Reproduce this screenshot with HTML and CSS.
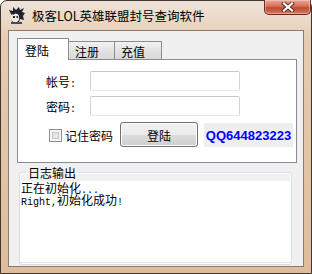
FILE: index.html
```html
<!DOCTYPE html>
<html lang="zh-CN">
<head>
  <meta charset="UTF-8">
  <title>极客LOL英雄联盟封号查询软件</title>
  <link rel="stylesheet" href="styles.css">
</head>
<body>
  <div class="window">
    <div class="titlebar">
      <svg class="app-icon" width="16" height="17" viewBox="0 0 16 17">
        <path d="M2 7 L0 3 L4 4 L4 0 L7 3 L10 0 L11 3 L15 1 L13 5 L16 6 L14 9 L15 13 L11 12 L10 15 L3 15 Z" fill="#1d2333"/>
        <path d="M2 8 L5 6 L9 7 L10 9 L10 13 L8 15 L4 15 L2 12 Z" fill="#f6e6da"/>
        <path d="M3 6 L6 4 L8 5 L10 4 L10 8 L7 6 L4 8 Z" fill="#1d2333"/>
        <rect x="4" y="9" width="2" height="2" fill="#222"/>
        <rect x="7.5" y="9" width="1.5" height="2" fill="#222"/>
        <path d="M2 15 L13 15 L13 17 L2 17 Z" fill="#3b4a7a"/>
      </svg>
      <span class="title">极客LOL英雄联盟封号查询软件</span>
      <div class="close-btn">
        <svg width="16" height="10" viewBox="0 0 16 10">
          <path d="M4 1.5 L12 8.5 M12 1.5 L4 8.5" stroke="#5a2a20" stroke-width="4" stroke-linecap="square"/>
          <path d="M4 1.5 L12 8.5 M12 1.5 L4 8.5" stroke="#ffffff" stroke-width="2.2" stroke-linecap="square"/>
        </svg>
      </div>
    </div>

    <div class="client">
      <div class="tabs">
        <div class="tab-head">
          <div class="tab active">登陆</div>
          <div class="tab">注册</div>
          <div class="tab">充值</div>
        </div>
        <div class="tab-panel">
          <div class="field">
            <label for="account">帐号<span class="ascii">:</span></label>
            <input type="text" id="account">
          </div>
          <div class="field">
            <label for="password">密码<span class="ascii">:</span></label>
            <input type="password" id="password">
          </div>
          <div class="actions">
            <span class="check"></span>
            <span class="check-label">记住密码</span>
            <button class="login-btn">登陆</button>
            <span class="qq">QQ644823223</span>
          </div>
        </div>
      </div>

      <fieldset class="log">
        <legend>日志输出</legend>
        <div class="log-text">
          <div class="log-line">正在初始化<span class="ascii">...</span></div>
          <div class="log-line"><span class="ascii">Right,</span>初始化成功<span class="ascii">!</span></div>
        </div>
      </fieldset>
    </div>
  </div>
</body>
</html>
```

FILE: styles.css
```css
*, *::before, *::after { box-sizing: border-box; margin: 0; padding: 0; }
body { width: 312px; height: 274px; background: #fff; font-family: "Noto Sans CJK SC", "Liberation Sans", sans-serif; font-size: 12px; color: #000; }

.window {
  width: 312px; height: 274px; display: flex; flex-direction: column;
  border: 1px solid #3f3630; border-radius: 7px 7px 0 0;
  background: linear-gradient(to bottom, #eee4da 0, #e6cbb0 40px, #dfbd9c 100%);
  padding: 0 7px 6px 7px;
}

/* title bar */
.titlebar { height: 29px; display: flex; align-items: flex-start; flex-shrink: 0; }
.app-icon { margin: 6px 0 0 1px; flex-shrink: 0; }
.title { margin: 7px 0 0 7px; font-size: 12.5px; line-height: 16px; white-space: nowrap; }
.close-btn {
  margin: -1px -7px 0 auto; width: 47px; height: 15px;
  border: 1px solid #6e2a1c; border-top: none; border-radius: 0 0 5px 5px;
  background: linear-gradient(to bottom, #e9a898 0, #d66e58 45%, #c04a30 55%, #d47a5e 100%);
  display: flex; align-items: center; justify-content: center;
  box-shadow: inset 0 0 0 1px rgba(255,220,210,0.45);
}

/* client area */
.client {
  flex: 1; background: #f0f0f0; border: 1px solid #8b7c70;
  padding: 7px 6px 1px 8px; display: flex; flex-direction: column;
}

.tab-head { display: flex; align-items: flex-end; height: 21px; position: relative; z-index: 1; }
.tab {
  height: 18px; border: 1px solid #898c95; border-bottom: none; border-left: none;
  background: linear-gradient(to bottom, #f2f2f2, #e3e3e3 50%, #d9d9d9);
  padding: 3px 0 0 6px; line-height: 14px;
}
.tab:nth-child(2) { width: 46px; }
.tab:nth-child(3) { width: 47px; }
.tab.active {
  width: 52px; height: 22px; margin-bottom: -1px; background: #fff;
  border-left: 1px solid #898c95; padding: 5px 0 0 7px;
}

.tab-panel {
  height: 104px; background: #fff; border: 1px solid #898c95;
  padding: 11px 0 0 0; display: flex; flex-direction: column; gap: 5px;
}
.field { display: flex; align-items: center; }
.field label { width: 72px; text-align: right; padding: 3px 14px 0 0; line-height: 14px; }
.field input {
  width: 150px; height: 20px; border: 1px solid #d0d4da; border-radius: 2px;
  border-top-color: #c4c7cc; border-bottom-color: #e3e9ef; background: #fff; outline: none;
}

.actions { display: flex; align-items: center; margin-top: 1px; height: 25px; }
.check {
  width: 13px; height: 13px; margin: 1px 0 0 31px; border: 1px solid #8e8f8f;
  background: linear-gradient(135deg, #d6d6d6, #f4f4f4);
  box-shadow: inset 0 0 0 2px #f4f4f4, inset 0 0 0 3px #c6c6c6;
}
.check-label { margin: 2px 0 0 3px; line-height: 14px; }
.login-btn {
  width: 78px; height: 25px; margin-left: 7px; font: inherit; font-size: 12px;
  border: 1px solid #707070; border-radius: 3px; color: #000;
  background: linear-gradient(to bottom, #f2f2f2 0, #ebebeb 50%, #dddddd 51%, #cfcfcf 100%);
  box-shadow: inset 0 0 0 1px #fcfcfc; padding-top: 1px;
}
.qq {
  width: 89px; height: 24px; margin: 1px 0 0 6px; background: #eeeeee;
  color: #0000ff; font-family: "Liberation Sans", sans-serif; font-weight: bold; font-size: 13px;
  display: flex; align-items: center; justify-content: center;
}

/* log group */
.log {
  margin: 3px 5px 0 2px; flex: 1; border: 1px solid #d5dfe5; border-radius: 3px;
  padding: 0; display: flex; flex-direction: column; min-height: 0;
  box-shadow: inset 0 0 0 1px #fff;
}
.log legend { margin-left: 6px; padding: 0 2px; line-height: 13px; }
.log-text {
  flex: 1; margin: 2px 0 1px 0; background: #fff; border-bottom: 1px solid #e3e9ef;
  padding: 1px 1px;
}
.log-line { height: 12px; line-height: 12px; white-space: nowrap; }
.ascii { font-family: "Liberation Mono", monospace; font-size: 10px; line-height: 10px; }
```
